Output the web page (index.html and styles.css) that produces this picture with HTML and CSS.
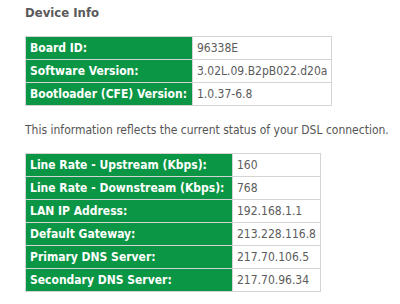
FILE: index.html
```html
<!DOCTYPE html>
<html lang="en">
<head>
  <meta charset="UTF-8">
  <title>Device Info</title>
  <link rel="stylesheet" href="styles.css">
</head>
<body>
  <div class="page">
    <h1 class="title">Device Info</h1>

    <table class="info info-device">
      <tr><th>Board ID:</th><td>96338E</td></tr>
      <tr><th>Software Version:</th><td>3.02L.09.B2pB022.d20a</td></tr>
      <tr><th>Bootloader (CFE) Version:</th><td>1.0.37-6.8</td></tr>
    </table>

    <p class="note">This information reflects the current status of your DSL connection.</p>

    <table class="info info-dsl">
      <tr><th>Line Rate - Upstream (Kbps):</th><td>160</td></tr>
      <tr><th>Line Rate - Downstream (Kbps):</th><td>768</td></tr>
      <tr><th>LAN IP Address:</th><td>192.168.1.1</td></tr>
      <tr><th>Default Gateway:</th><td>213.228.116.8</td></tr>
      <tr><th>Primary DNS Server:</th><td>217.70.106.5</td></tr>
      <tr><th>Secondary DNS Server:</th><td>217.70.96.34</td></tr>
    </table>
  </div>
</body>
</html>
```

FILE: styles.css
```css
body {
  margin: 0;
  background: #fff;
  font-family: "DejaVu Sans Condensed", "DejaVu Sans", Verdana, sans-serif;
  font-size: 12px;
  color: #555;
}
.page {
  padding: 5px 0 0 25px;
}
.title {
  margin: 0 0 16px 0;
  font-size: 13px;
  font-weight: bold;
  color: #5a5a5a;
}
.info {
  border-collapse: collapse;
  border: 1px solid #c4c4c4;
}
.info th,
.info td {
  height: 22px;
  padding: 0 4px;
  border: 1px solid #d4d4d4;
  text-align: left;
  white-space: nowrap;
}
.info th {
  background: #0a9645;
  color: #fff;
  font-weight: bold;
}
.info td {
  background: #fff;
  color: #5c5c5c;
}
.info-device th { width: 158px; }
.info-device td { width: 124px; }
.info-dsl th { width: 198px; }
.info-dsl td { width: 76px; }
.note {
  margin: 17px 0 16px 0;
}
```
